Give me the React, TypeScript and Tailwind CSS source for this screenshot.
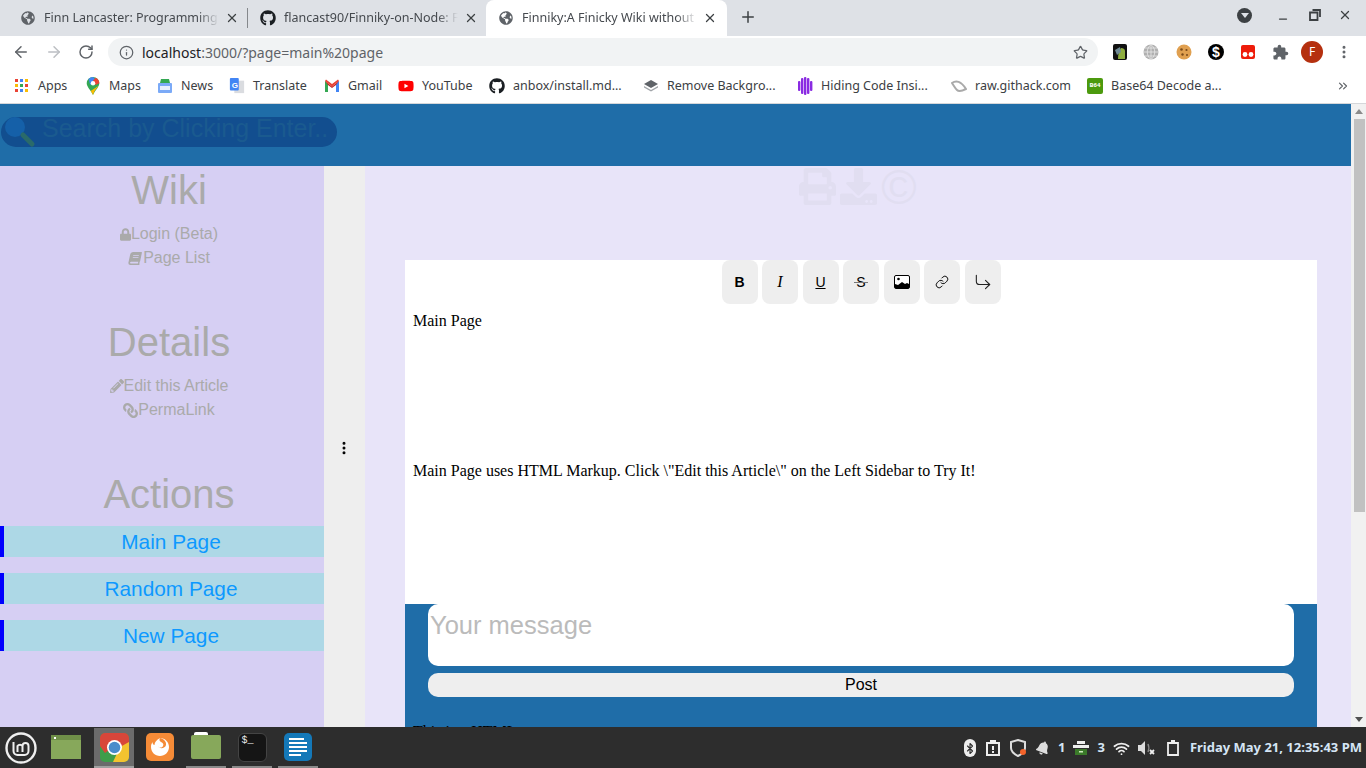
import React from 'react';
import { ArrowLeft, ArrowRight, RotateCw, Info, Star, X, Plus, Minus, EllipsisVertical, ChevronsRight, Link as LinkIcon, CornerDownRight, Bluetooth, Wifi } from "lucide-react";
import { FaGlobeAmericas, FaGithub, FaLock, FaBook, FaPencilAlt, FaLink, FaPrint, FaDownload, FaBell, FaYoutube } from "react-icons/fa";
import { MdExtension } from "react-icons/md";

const uiFont = "font-['Noto_Sans',sans-serif]";

const Tab = ({ icon, title, active, w }: { icon: React.ReactNode; title: string; active?: boolean; w: string }) => (
  <div className={`${w} h-full flex items-center pl-[12px] relative shrink-0 ${active ? 'bg-white rounded-t-[8px] pr-[10px]' : 'pr-[8px]'}`}>
    <span className="w-[16px] h-[16px] mr-[8px] shrink-0 flex items-center justify-center text-[#5f6368]">{icon}</span>
    <span className="flex-1 whitespace-nowrap overflow-hidden text-[12.5px] text-[#45494e] [mask-image:linear-gradient(to_right,black_88%,transparent)]">{title}</span>
    <X className="w-[14px] h-[14px] ml-[6px] text-[#3c4043] shrink-0" strokeWidth={2.2} />
  </div>
);

const MapsIcon = () => (
  <svg width="16" height="18" viewBox="0 0 16 20">
    <path d="M8 0a7 7 0 0 1 7 7c0 4-4 7-7 13C5 14 1 11 1 7a7 7 0 0 1 7-7z" fill="#34a853" />
    <path d="M3 2.2A7 7 0 0 1 8 0l3 3-6 6z" fill="#4285f4" />
    <path d="M11 .7A7 7 0 0 1 15 7l-4 2-3-5z" fill="#ea4335" />
    <path d="M13.8 10C12 13 9.5 15 8 20c-.7-1.8-1.6-3.2-2.6-4.5z" fill="#fbbc04" />
    <circle cx="8" cy="7" r="2.5" fill="#fff" />
  </svg>
);

const bookmarks: { label: string; w: string; icon: React.ReactNode }[] = [
  { label: "Apps", w: "w-[71px]", icon: <svg width="14" height="14" viewBox="0 0 14 14">
      {[1, 6, 11].map((x, i) => [1, 6, 11].map((y, j) => <rect key={`${i}${j}`} x={x - 1} y={y - 1} width="3" height="3" fill={["#ea4335", "#4285f4", "#fbbc04", "#34a853"][(i + j * 2) % 4]} />))}
    </svg> },
  { label: "Maps", w: "w-[72px]", icon: <MapsIcon /> },
  { label: "News", w: "w-[72px]", icon: <svg width="16" height="16" viewBox="0 0 16 16"><rect x="1" y="5" width="14" height="10" rx="1" fill="#7baaf7" /><path d="M3 5 L4 1 H12 L13 5z" fill="#34a853" /><rect x="3" y="8" width="10" height="4" fill="#e8f0fe" /></svg> },
  { label: "Translate", w: "w-[95px]", icon: <svg width="18" height="18" viewBox="0 0 18 18"><rect x="6" y="3" width="11" height="14" fill="#dadce0" /><rect x="1" y="0" width="10" height="14" rx="1" fill="#4285f4" /><text x="3" y="11" fontSize="9" fontWeight="700" fill="#fff" fontFamily="Liberation Sans">G</text></svg> },
  { label: "Gmail", w: "w-[74px]", icon: <svg width="16" height="13" viewBox="0 0 16 13"><path d="M1 13V2l7 5.5L15 2v11h-3V6L8 9 4 6v7z" fill="#c5221f" /><path d="M1 2l1-1.5L8 5l6-4.500L15 2 8 7.500z" fill="#ea4335" /><path d="M12 6l3-4v11h-3z" fill="#4285f4" /><path d="M1 2l3 4v7H1z" fill="#34a853" /></svg> },
  { label: "YouTube", w: "w-[91px]", icon: <FaYoutube className="w-[16px] h-[16px] text-[#ff0000]" /> },
  { label: "anbox/install.md...", w: "w-[154px]", icon: <FaGithub className="w-[16px] h-[16px] text-[#1b1f23]" /> },
  { label: "Remove Backgro...", w: "w-[154px]", icon: <svg width="16" height="14" viewBox="0 0 16 14"><path d="M8 1l7 4-7 4-7-4z" fill="#5f6368" /><path d="M1 7l7 4 7-4v1.500l-7 4-7-4z" fill="#a0a4a8" /></svg> },
  { label: "Hiding Code Insi...", w: "w-[154px]", icon: <svg width="16" height="18" viewBox="0 0 16 18">{[1, 4, 7, 10, 13].map((x, i) => <rect key={x} x={x} y={i % 4 === 0 ? 4 : i === 2 ? 0 : 1} width="2.4" height={i % 4 === 0 ? 10 : i === 2 ? 18 : 16} rx="1" fill="#8a2be2" />)}</svg> },
  { label: "raw.githack.com", w: "w-[136px]", icon: <svg width="16" height="12" viewBox="0 0 16 12"><path d="M1 3c4-3 9-2 14 6-4 2-7 3-9 1C4 8 3 6 1 3z" fill="none" stroke="#aaa" strokeWidth="2" /></svg> },
  { label: "Base64 Decode a...", w: "w-[232px]", icon: <span className="w-[16px] h-[16px] bg-[#4c9a0e] rounded-[2px] text-white text-[6px] font-bold flex items-center justify-center">B64</span> },
];

const sideLink = "flex items-center justify-center h-[24px] pl-[14px] text-[16px] text-[#aaaaaa]";
const sideHeading = "text-[40px] leading-[46px] pl-[14px] text-[#aaaaaa] text-center";
const actionRow = "h-[31px] border-l-[4px] border-[#0000ff] bg-[#add8e6] pl-[14px] flex items-center justify-center text-[20.800px] text-[#0d99ff] mb-[16px]";
const toolBtn = "w-[36px] h-[44px] bg-[#eeeeee] rounded-[8px] flex items-center justify-center text-black shrink-0";

const ChromeIcon = () => (
  <svg width="29" height="29" viewBox="0 0 29 29">
    <defs><clipPath id="rr"><rect width="29" height="29" rx="5" /></clipPath></defs>
    <g clipPath="url(#rr)">
      <rect width="29" height="29" fill="#3f9d4a" />
      <path d="M0 0H29V13H14.500L5 20 0 13z" fill="#d8463a" />
      <path d="M29 9V29H13L20 14z" fill="#f3c32f" />
      <circle cx="14.500" cy="14.500" r="7.500" fill="#fff" />
      <circle cx="14.500" cy="14.500" r="5.800" fill="#4a8ccb" />
    </g>
  </svg>
);

const TaskSlot = ({ children, bar, active }: { children: React.ReactNode; bar?: boolean; active?: boolean }) => (
  <div className={`w-[40px] h-[40px] flex items-center justify-center shrink-0 border-b-[2px] ${active ? 'bg-[#6b6b6b] border-[#a0a0a0]' : bar ? 'border-[#8a8a8a]' : 'border-transparent'}`}>
    {children}
  </div>
);

const App = () => {
  return (
    <div className="w-[1366px] h-[768px] overflow-hidden flex flex-col font-['Liberation_Sans',sans-serif] bg-white">
      {/* browser chrome */}
      <div className={`h-[36px] bg-[#dee1e6] flex items-end shrink-0 ${uiFont}`}>
        <div className="w-[8px]" />
        <Tab w="w-[239px]" title="Finn Lancaster: Programming Portfolio" icon={<FaGlobeAmericas className="w-[14px] h-[14px]" />} />
        <div className="w-px h-[20px] bg-[#85888c] mb-[8px] shrink-0" />
        <Tab w="w-[238px]" title="flancast90/Finniky-on-Node: Fin" icon={<FaGithub className="w-[16px] h-[16px] text-[#1b1f23]" />} />
        <Tab w="w-[241px]" active title="Finniky:A Finicky Wiki without a" icon={<FaGlobeAmericas className="w-[14px] h-[14px]" />} />
        <Plus className="w-[18px] h-[18px] ml-[12px] mb-[10px] text-[#3c4043]" strokeWidth={2} />
        <div className="flex-1" />
        <div className="flex items-center mb-[11px]">
          <div className="w-[15px] h-[15px] rounded-full bg-[#3c4043] flex items-center justify-center mr-[25px]">
            <div className="w-0 h-0 border-l-[4px] border-r-[4px] border-t-[5px] border-l-transparent border-r-transparent border-t-[#dee1e6]" />
          </div>
          <Minus className="w-[12px] h-[12px] text-[#3c4043] mr-[20px] mt-[8px]" strokeWidth={2.5} />
          <svg width="12" height="12" viewBox="0 0 12 12" className="mr-[17px]"><path d="M3.500 1h7.500v7M1 3.500h7.500V11H1z" fill="none" stroke="#3c4043" strokeWidth="1.800" /></svg>
          <X className="w-[14px] h-[14px] text-[#3c4043] mr-[14px]" strokeWidth={2.2} />
        </div>
      </div>
      <div className={`h-[32px] bg-white flex items-center shrink-0 ${uiFont}`}>
        <ArrowLeft className="w-[18px] h-[18px] ml-[12px] text-[#5f6368]" strokeWidth={2} />
        <ArrowRight className="w-[18px] h-[18px] ml-[15px] text-[#bcbfc3]" strokeWidth={2} />
        <RotateCw className="w-[16px] h-[16px] ml-[15px] text-[#5f6368]" strokeWidth={2.2} />
        <div className="w-[990px] h-[28px] ml-[14px] rounded-full bg-[#f1f3f4] flex items-center pl-[11px] pr-[10px]">
          <Info className="w-[15px] h-[15px] text-[#5f6368]" strokeWidth={2} />
          <span className="ml-[8px] text-[14px] text-[#202124]">localhost<span className="text-[#5f6368]">:3000/?page=main%20page</span></span>
          <Star className="w-[15px] h-[15px] ml-auto text-[#5f6368]" strokeWidth={2} />
        </div>
        <div className="w-[15px]" />
        <svg width="14" height="16" viewBox="0 0 14 16"><rect width="14" height="16" rx="2" fill="#111" /><path d="M5 15c0-5 1-8 3-11 2 0 4 1 4 3v8z" fill="#8fae3f" /><path d="M2 6l5-3 1 5-4 3z" fill="#6f8a94" /></svg>
        <svg width="16" height="16" viewBox="0 0 16 16" className="ml-[16px]"><circle cx="8" cy="8" r="7.500" fill="#b0b0b0" /><path d="M0 8h16M8 0v16M2 4h12M2 12h12M8 .5c-5 4-5 11 0 15M8 .5c5 4 5 11 0 15" stroke="#e8e8e8" strokeWidth=".8" fill="none" /></svg>
        <svg width="16" height="16" viewBox="0 0 16 16" className="ml-[17px]"><circle cx="8" cy="8" r="7.500" fill="#e0a050" /><circle cx="5.500" cy="5.500" r="1.300" fill="#7a4a1a" /><circle cx="10.500" cy="6" r="1.100" fill="#7a4a1a" /><circle cx="6.500" cy="10.500" r="1.200" fill="#7a4a1a" /><circle cx="11" cy="11" r="1" fill="#7a4a1a" /></svg>
        <span className="w-[16px] h-[16px] ml-[16px] rounded-full bg-black text-white text-[14px] leading-none font-bold font-['Liberation_Sans',sans-serif] flex items-center justify-center">$</span>
        <svg width="14" height="14" viewBox="0 0 14 14" className="ml-[17px]"><rect width="14" height="14" rx="2" fill="#ee1c0a" /><circle cx="4" cy="9.500" r="2.400" fill="#fff" /><circle cx="10" cy="9.500" r="2.400" fill="#fff" /></svg>
        <MdExtension className="w-[17px] h-[17px] ml-[17px] text-[#5f6368]" />
        <span className="w-[22px] h-[22px] ml-[12px] rounded-full bg-[#b5300f] text-white text-[12px] flex items-center justify-center">F</span>
        <EllipsisVertical className="w-[16px] h-[16px] ml-[13px] text-[#5f6368]" strokeWidth={2.5} />
      </div>
      <div className={`h-[36px] bg-white flex items-center pl-[14px] shrink-0 border-b border-[#d5d7da] ${uiFont}`}>
        {bookmarks.map((b) => (
          <div key={b.label} className={`${b.w} flex items-center shrink-0`}>
            <span className="w-[16px] flex items-center justify-center shrink-0">{b.icon}</span>
            <span className="ml-[8px] pt-[1px] text-[12.500px] text-[#3c4043] whitespace-nowrap">{b.label}</span>
          </div>
        ))}
        <ChevronsRight className="w-[14px] h-[14px] ml-[17px] text-[#5f6368]" strokeWidth={2} />
      </div>

      {/* page viewport */}
      <div className="h-[623px] flex shrink-0 overflow-hidden">
        <div className="w-[1351px] flex flex-col shrink-0">
          <div className="h-[62px] bg-[#1f6da8] pt-[13px] pl-[1px] shrink-0">
            <div className="w-[336px] h-[30px] rounded-full bg-[#124e8f] flex text-[25px] leading-[22px] text-[#1a5a8f] whitespace-nowrap">
              <svg width="36" height="36" viewBox="0 0 36 36" className="-mt-[3px] shrink-0">
                <circle cx="14" cy="13" r="10" fill="#1560a8" />
                <path d="M22 21l9 9" stroke="#2a6a6a" strokeWidth="5" strokeLinecap="round" />
              </svg>
              <span className="ml-[5px]">Search by Clicking Enter..</span>
            </div>
          </div>
          <div className="flex-1 flex min-h-0">
            <aside className="w-[324px] bg-[#d6cff3] shrink-0 pt-[1px]">
              <h2 className={sideHeading}>Wiki</h2>
              <div className="mt-[9px]">
                <div className={sideLink}><FaLock className="w-[11px] h-[13px]" />Login (Beta)</div>
                <div className={sideLink}><FaBook className="w-[14px] h-[13px] mr-[1px] -skew-x-12" />Page List</div>
              </div>
              <h2 className={`${sideHeading} mt-[49px]`}>Details</h2>
              <div className="mt-[9px]">
                <div className={sideLink}><FaPencilAlt className="w-[14px] h-[14px]" />Edit this Article</div>
                <div className={sideLink}><FaLink className="w-[15px] h-[15px] -scale-x-100" />PermaLink</div>
              </div>
              <h2 className={`${sideHeading} mt-[49px]`}>Actions</h2>
              <div className="mt-[9px]">
                <div className={actionRow}>Main Page</div>
                <div className={actionRow}>Random Page</div>
                <div className={actionRow}>New Page</div>
              </div>
            </aside>
            <div className="w-[41px] bg-[#eeeeee] shrink-0 flex justify-center pt-[268px] pr-[1px]">
              <EllipsisVertical className="w-[16px] h-[28px] text-black" strokeWidth={2.5} />
            </div>
            <main className="flex-1 bg-[#e8e4f9] pl-[40px] pr-[34px] overflow-hidden">
              <div className="h-[94px] flex justify-center pt-[2px] pr-[6px] text-[#e1def1]">
                <div className="flex items-start gap-[4px]">
                  <FaPrint className="w-[37px] h-[37px]" />
                  <FaDownload className="w-[37px] h-[37px]" />
                  <span className="text-[48px] leading-[40px]">©</span>
                </div>
              </div>
              <div className="h-[344px] bg-white font-['Liberation_Serif',serif] text-[16px] text-black">
                <div className="flex justify-center gap-[4.500px] font-['Liberation_Sans',sans-serif]">
                  <div className={`${toolBtn} text-[14px] font-bold`}>B</div>
                  <div className={`${toolBtn} font-['Liberation_Serif',serif] italic text-[16px]`}>I</div>
                  <div className={`${toolBtn} text-[14px] underline`}>U</div>
                  <div className={`${toolBtn} text-[14px] relative text-[#333]`}>
                    S
                    <div className="absolute left-[11px] top-[22px] w-[14px] h-px bg-[#777]" />
                  </div>
                  <div className={toolBtn}>
                    <svg width="16" height="14" viewBox="0 0 16 14">
                      <rect x=".5" y=".5" width="15" height="13" rx="1.500" fill="#fff" stroke="#000" />
                      <circle cx="4.500" cy="4" r="1.300" fill="#000" />
                      <path d="M1 13V9l3 1 4-3 3 2 2-1 2 1v4z" fill="#000" />
                    </svg>
                  </div>
                  <div className={toolBtn}><LinkIcon className="w-[14px] h-[14px]" strokeWidth={1.6} /></div>
                  <div className={toolBtn}><CornerDownRight className="w-[20px] h-[20px] text-[#222]" strokeWidth={1.3} /></div>
                </div>
                <p className="pl-[8px] mt-[8px] leading-[18px]">Main Page</p>
                <p className="pl-[8px] mt-[132px] leading-[18px]">Main Page uses HTML Markup. Click \"Edit this Article\" on the Left Sidebar to Try It!</p>
              </div>
              <div className="h-[123px] bg-[#1f6da8] overflow-hidden">
                <div className="mx-[23px] h-[62px] bg-white rounded-[10px] pl-[2px] text-[25.500px] leading-[42px] text-[#bbbbbb]">Your message</div>
                <div className="mx-[23px] mt-[7px] h-[24px] bg-[#eeeeee] rounded-[10px] flex items-center justify-center text-[16px] text-black">Post</div>
                <p className="pl-[8px] mt-[26px] font-['Liberation_Serif',serif] text-[16px] leading-[18px] text-black">This is a HTML comment</p>
              </div>
            </main>
          </div>
        </div>
        <div className="w-[15px] bg-[#f1f1f1] flex flex-col items-center shrink-0 pl-[1px]">
          <div className="h-[15px] flex items-center">
            <div className="w-0 h-0 border-l-[4.500px] border-r-[4.500px] border-b-[5px] border-l-transparent border-r-transparent border-b-[#8a8a8a]" />
          </div>
          <div className="w-[11px] h-[393px] bg-[#c1c1c1]" />
          <div className="flex-1" />
          <div className="h-[15px] flex items-center">
            <div className="w-0 h-0 border-l-[4.500px] border-r-[4.500px] border-t-[5px] border-l-transparent border-r-transparent border-t-[#505050]" />
          </div>
        </div>
      </div>

      {/* desktop panel */}
      <div className="h-[41px] bg-[#2d2d2d] flex items-end shrink-0 font-['Noto_Sans',sans-serif]">
        <div className="w-[42px] h-[40px] flex items-center justify-center shrink-0">
          <svg width="32" height="32" viewBox="0 0 32 32" fill="none" stroke="#efefef">
            <circle cx="16" cy="16" r="14.500" strokeWidth="2.400" />
            <path d="M8.500 10v9a4 4 0 0 0 4 4h7a4 4 0 0 0 4-4v-5a3 3 0 0 0-6 0v6m0-6a3 3 0 0 0-5 0v6" strokeWidth="2" />
          </svg>
        </div>
        <div className="w-[4px]" />
        <TaskSlot>
          <div className="w-[30px] h-[24px] bg-[#87a85b] border-t-[5px] border-[#6f8f48] relative">
            <div className="absolute -top-[3px] left-[3px] w-[2px] h-[2px] bg-white" />
          </div>
        </TaskSlot>
        <div className="w-[8px]" />
        <TaskSlot active><ChromeIcon /></TaskSlot>
        <div className="w-[6px]" />
        <TaskSlot>
          <div className="w-[28px] h-[28px] rounded-[5px] bg-[#f58b37] flex items-center justify-center">
            <svg width="20" height="20" viewBox="0 0 20 20"><path d="M10 1c5 0 9 4 9 9s-4 9-9 9-9-4-9-9c0-2 .6-3.500 1.500-5 0 2 1 3 2 3 0-3 2-5 5.500-7-1 2-.5 3 1 4 2 1 3 2 2 4-1 2-4 2-5 0 1 3 7 3 8-1 .7-3-2-6-6-7z" fill="#fff" /></svg>
          </div>
        </TaskSlot>
        <div className="w-[6px]" />
        <TaskSlot bar>
          <div className="w-[30px] h-[24px] bg-[#87a85b] rounded-[2px] relative">
            <div className="absolute -top-[3px] left-[3px] w-[14px] h-[3px] bg-white rounded-t-[2px]" />
          </div>
        </TaskSlot>
        <div className="w-[6px]" />
        <TaskSlot bar>
          <div className="w-[29px] h-[29px] rounded-[6px] bg-[#151515] border border-[#444] text-[#eee] text-[10px] font-['Liberation_Mono',monospace] pl-[3px] pt-[1px] leading-[12px]">$_</div>
        </TaskSlot>
        <div className="w-[6px]" />
        <TaskSlot bar>
          <div className="w-[28px] h-[28px] rounded-[5px] bg-[#1478b8] flex flex-col gap-[2px] justify-center pl-[5px]">
            <div className="w-[15px] h-[2px] bg-white" />
            <div className="w-[18px] h-[2px] bg-white" />
            <div className="w-[18px] h-[2px] bg-white" />
            <div className="w-[18px] h-[2px] bg-white" />
            <div className="w-[12px] h-[2px] bg-white" />
          </div>
        </TaskSlot>
        <div className="flex-1" />
        <div className="h-[40px] flex items-center text-[#d5e5f5] font-bold text-[13px] whitespace-nowrap pr-[4px]">
          <span className="w-[12px] h-[18px] rounded-full bg-[#eee] flex items-center justify-center">
            <Bluetooth className="w-[12px] h-[13px] text-[#2d2d2d]" strokeWidth={2.2} />
          </span>
          <svg width="14" height="16" viewBox="0 0 14 16" className="ml-[10px]"><path d="M1 3h12v12H1z" fill="none" stroke="#eee" strokeWidth="2" /><rect x="4" y="0" width="6" height="4" fill="#eee" /><rect x="6" y="6" width="2" height="4" fill="#eee" /><rect x="6" y="11" width="2" height="2" fill="#eee" /></svg>
          <svg width="18" height="18" viewBox="0 0 18 18" className="ml-[10px]"><path d="M8 1l7 2v6c0 4-3 6-7 8-4-2-7-4-7-8V3z" fill="none" stroke="#ddd" strokeWidth="2" /><circle cx="13" cy="13" r="3" fill="#f4632a" /></svg>
          <FaBell className="w-[14px] h-[14px] ml-[8px] text-[#ddd] rotate-[20deg]" />
          <span className="ml-[8px]">1</span>
          <svg width="16" height="15" viewBox="0 0 16 15" className="ml-[8px]"><rect x="4" y="0" width="8" height="3" fill="#eee" /><rect x="0" y="4" width="16" height="3" fill="#eee" /><rect x="2" y="8" width="12" height="6" fill="#3b7a2a" /><rect x="6" y="10" width="4" height="1.500" fill="#cfe8c0" /></svg>
          <span className="ml-[8px]">3</span>
          <Wifi className="w-[17px] h-[17px] ml-[8px] text-[#eee]" strokeWidth={2.5} />
          <svg width="18" height="16" viewBox="0 0 18 16" className="ml-[8px]"><path d="M0 5h3l4-4v14l-4-4H0z" fill="#ddd" /><path d="M10 4c1 2 1 6 0 8" stroke="#888" strokeWidth="1.500" fill="none" /><path d="M12 10l4 4m0-4l-4 4" stroke="#eee" strokeWidth="1.800" /></svg>
          <svg width="12" height="16" viewBox="0 0 12 16" className="ml-[11px]"><path d="M1 3h10v12H1z" fill="none" stroke="#eee" strokeWidth="1.800" /><rect x="4" y="0" width="4" height="3" fill="#eee" /></svg>
          <span className="ml-[11px]">Friday May 21, 12:35:43 PM</span>
        </div>
      </div>
    </div>
  );
};

export default App;
